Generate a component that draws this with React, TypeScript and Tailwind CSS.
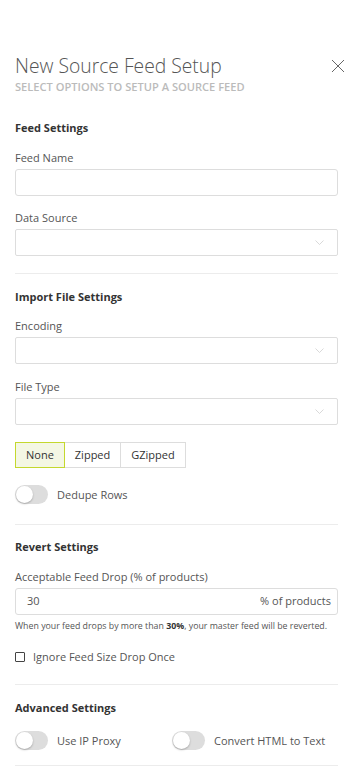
import { useState } from 'react';

function Toggle({ label, on, onChange }: { label: string; on: boolean; onChange: (v: boolean) => void }) {
  return (
    <button type="button" onClick={() => onChange(!on)} className="flex items-center gap-[9px]">
      <span className={`relative w-[33px] h-[19px] rounded-full ${on ? 'bg-[#c4d82e]' : 'bg-[#dddddd]'}`}>
        <span
          className={`absolute top-[1px] w-[17px] h-[17px] rounded-full bg-white shadow-[0_1px_2px_rgba(0,0,0,0.25)] ${on ? 'left-[15px]' : 'left-[1px]'}`}
        />
      </span>
      <span className="text-[11px] leading-4 text-[#555]">{label}</span>
    </button>
  );
}

function SelectBox() {
  return (
    <div className="mt-[3px] h-[27px] border border-[#dddddd] rounded-[2px] flex items-center justify-end pr-[13px]">
      <svg width="9" height="5" viewBox="0 0 9 5" fill="none">
        <path d="M0.5 0.5 L4.5 4.5 L8.5 0.5" stroke="#cfcfcf" strokeWidth="0.8" />
      </svg>
    </div>
  );
}

function Divider({ className }: { className: string }) {
  return <div className={`h-px bg-[#ececec] ${className}`} />;
}

export default function App() {
  const [compression, setCompression] = useState('None');
  const [dedupe, setDedupe] = useState(false);
  const [proxy, setProxy] = useState(false);
  const [html, setHtml] = useState(false);
  const [ignoreDrop, setIgnoreDrop] = useState(false);

  return (
    <div className="min-h-[768px] bg-white pl-[15px] pr-[16px] pt-[52px] pb-[2px] font-['Open_Sans',sans-serif] text-[#555]">
      {/* header */}
      <div className="flex justify-between items-center">
        <h1 className="text-[19.3px] leading-[28px] font-light text-[#555]">New Source Feed Setup</h1>
        <svg width="14" height="14" viewBox="0 0 14 14" className="-mr-[7px]">
          <path d="M1 1 L13 13 M13 1 L1 13" stroke="#666" strokeWidth="1" />
        </svg>
      </div>
      <p className="text-[11.1px] leading-[14px] font-semibold uppercase text-[#bbbbbb]">Select options to setup a source feed</p>

      {/* feed settings */}
      <h2 className="mt-[26px] text-[11px] leading-4 font-bold text-[#333]">Feed Settings</h2>
      <label className="block mt-[14px] text-[11px] leading-4">Feed Name</label>
      <input className="block w-full mt-[3px] h-[27px] border border-[#dddddd] rounded-[3px] outline-none px-[11px] text-[11px]" />
      <label className="block mt-[14px] text-[11px] leading-4">Data Source</label>
      <SelectBox />

      <Divider className="mt-[17px]" />

      {/* import file settings */}
      <h2 className="mt-[15px] text-[11px] leading-4 font-bold text-[#333]">Import File Settings</h2>
      <label className="block mt-[13px] text-[11px] leading-4">Encoding</label>
      <div className="mt-[1px]">
        <SelectBox />
      </div>
      <label className="block mt-[15px] text-[11px] leading-4">File Type</label>
      <SelectBox />

      <div className="mt-[17px] flex">
        {['None', 'Zipped', 'GZipped'].map((opt, i) => (
          <button
            key={opt}
            type="button"
            onClick={() => setCompression(opt)}
            className={`h-[26px] px-[10px] text-[11px] border ${i > 0 ? '-ml-px' : ''} ${
              compression === opt
                ? 'relative z-10 border-[#c4d82e] bg-[#f4f7e4] text-[#333]'
                : 'border-[#dddddd] bg-white text-[#333]'
            }`}
          >
            {opt}
          </button>
        ))}
      </div>

      <div className="mt-[17px]">
        <Toggle label="Dedupe Rows" on={dedupe} onChange={setDedupe} />
      </div>

      <Divider className="mt-[20px]" />

      {/* revert settings */}
      <h2 className="mt-[14px] text-[11px] leading-4 font-bold text-[#333]">Revert Settings</h2>
      <label className="block mt-[14px] text-[11px] leading-4">Acceptable Feed Drop (% of products)</label>
      <div className="mt-[3px] h-[27px] border border-[#dddddd] rounded-[3px] flex items-center justify-between pl-[11px] pr-[6px] text-[11px]">
        <span>30</span>
        <span>% of products</span>
      </div>
      <p className="mt-[5px] text-[8.8px] leading-3 text-[#555]">
        When your feed drops by more than <span className="font-bold text-[#333]">30%</span>, your master feed will be reverted.
      </p>

      <button type="button" onClick={() => setIgnoreDrop(!ignoreDrop)} className="mt-[17px] flex items-center gap-[8px]">
        <span className={`w-[10px] h-[10px] border border-[#444] rounded-[1px] ${ignoreDrop ? 'bg-[#c4d82e]' : 'bg-white'}`} />
        <span className="text-[11px] leading-4 text-[#555]">Ignore Feed Size Drop Once</span>
      </button>

      <Divider className="mt-[19px]" />

      {/* advanced settings */}
      <h2 className="mt-[15px] text-[11px] leading-4 font-bold text-[#333]">Advanced Settings</h2>
      <div className="mt-[15px] flex">
        <div className="w-[157px]">
          <Toggle label="Use IP Proxy" on={proxy} onChange={setProxy} />
        </div>
        <Toggle label="Convert HTML to Text" on={html} onChange={setHtml} />
      </div>

      <Divider className="mt-[15px]" />
    </div>
  );
}
